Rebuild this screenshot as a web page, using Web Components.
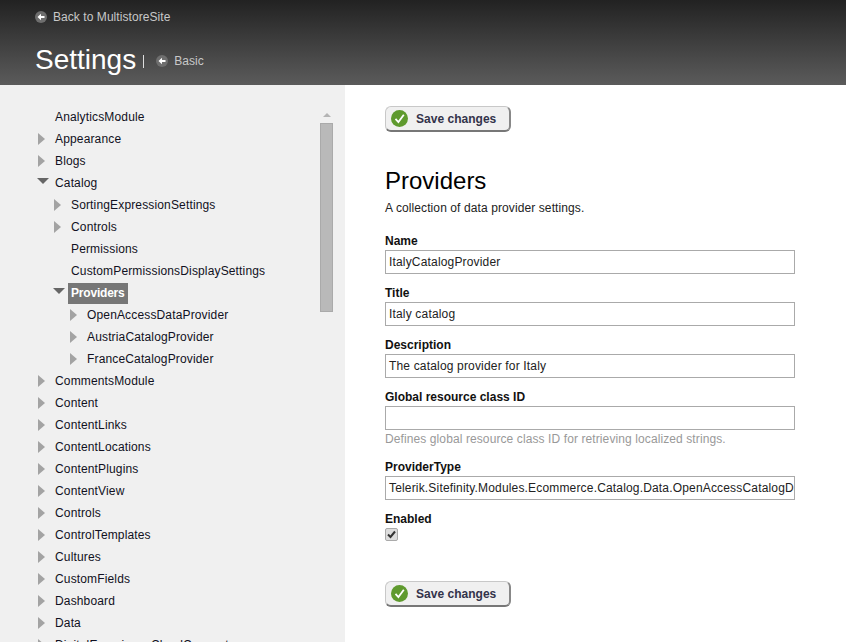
<!DOCTYPE html>
<html>
<head>
<meta charset="utf-8">
<title>Settings</title>
<style>
  html, body { margin: 0; padding: 0; height: 100%; overflow: hidden; background: #fff; }
  body { font-family: "Liberation Sans", Arial, sans-serif; font-size: 12px; color: #000; }
</style>
</head>
<body>
<template id="back-tpl">
  <style>
    :host { display: inline-flex; align-items: center; gap: 6px; color: #c8c8c8; font-size: 12px; letter-spacing: .06px; }
    svg { display: block; }
  </style>
  <svg width="12" height="12" viewBox="0 0 12 12"><circle cx="6" cy="6" r="6" fill="#6e6e6e"/><path d="M2.5 6 6 2.8V5h3.5v2H6v2.2z" fill="#fff"/></svg>
  <slot></slot>
</template>

<template id="header-tpl">
  <style>
    :host { display: block; height: 85px; box-sizing: border-box; padding: 11px 35px 0; background: linear-gradient(#222 0, #5b5b5b 100%); }
    .top { height: 12px; display: flex; align-items: center; }
    .row { display: flex; align-items: center; margin-top: 17px; }
    h1 { margin: 0; font-size: 28px; font-weight: normal; line-height: 40px; color: #fff; }
    .sep { width: 1px; height: 13px; background: #ddd; margin: 3px 12px 0 7px; }
    .basic { margin-top: 2px; }
  </style>
  <div class="top"><back-link>Back to MultistoreSite</back-link></div>
  <div class="row">
    <h1>Settings</h1>
    <span class="sep"></span>
    <back-link class="basic">Basic</back-link>
  </div>
</template>

<template id="tree-tpl">
  <style>
    :host { display: block; color: #111122; }
    .row { height: 22px; display: flex; align-items: center; }
    .arrow { width: 16px; height: 12px; flex: none; display: flex; align-items: center; margin-left: -1px; margin-right: 1px; }
    .label { padding: 0 3px; margin-left: -3px; line-height: 21px; height: 21px; letter-spacing: .15px; }
    :host([selected]) > .row .label { background: #777; color: #fff; font-weight: bold; letter-spacing: -.2px; }
    .kids { padding-left: 16px; }
    svg { display: block; }
  </style>
  <div class="row">
    <span class="arrow"></span>
    <span class="label"></span>
  </div>
  <div class="kids"><slot></slot></div>
</template>

<template id="sidebar-tpl">
  <style>
    :host { display: block; width: 345px; flex: none; position: relative; overflow: hidden; background: #f0f0f0; box-sizing: border-box; padding: 21px 0 0 39px; }
    .up { position: absolute; left: 323px; top: 28px; width: 0; height: 0; border: 4px solid transparent; border-top: 0; border-bottom: 4px solid #b4b4b4; }
    .thumb { position: absolute; left: 320px; top: 38px; width: 13px; height: 189px; box-sizing: border-box; background: #b9b9b9; border: 1px solid #aaa; }
  </style>
  <slot></slot>
  <div class="up"></div>
  <div class="thumb"></div>
</template>

<template id="button-tpl">
  <style>
    :host { display: inline-block; }
    button { display: flex; align-items: center; width: 126px; height: 26px; box-sizing: border-box; padding: 0 0 0 5px; margin: 0; background: #f0f0f0; border: 1px solid #c8c8c8; border-right: 2px solid #888; border-bottom: 2px solid #777; border-radius: 6px; font: bold 12px "Liberation Sans", Arial, sans-serif; letter-spacing: .02px; color: #33334a; }
    svg { display: block; margin-right: 8px; }
  </style>
  <button type="button">
    <svg width="17" height="17" viewBox="0 0 17 17"><circle cx="8.5" cy="8.5" r="8.5" fill="#5f9a2e"/><path d="M4.5 8.8 7.4 12 12.8 4.8" fill="none" stroke="#fff" stroke-width="1.8"/></svg>
    <slot></slot>
  </button>
</template>

<template id="field-tpl">
  <style>
    :host { display: block; margin-bottom: 12px; }
    label { display: block; font-weight: bold; line-height: 14px; margin-bottom: 2px; color: #111; }
    .box { height: 24px; width: 410px; box-sizing: border-box; border: 1px solid #aaa; padding: 0 3px; line-height: 22px; white-space: nowrap; overflow: hidden; color: #222; background: #fff; letter-spacing: .17px; }
    .hint { color: #999; line-height: 14px; margin-top: 2px; padding-bottom: 2px; letter-spacing: .1px; }
  </style>
  <label></label>
  <div class="box"></div>
  <div class="hint" hidden></div>
</template>

<template id="check-tpl">
  <style>
    :host { display: block; }
    label { display: block; font-weight: bold; line-height: 14px; color: #111; margin-bottom: 2px; }
    .box { display: flex; align-items: center; justify-content: center; width: 11px; height: 11px; border: 1px solid #aaa; border-radius: 2px; background: #ddd; }
    svg { display: block; }
  </style>
  <label><slot></slot></label>
  <div class="box"><svg width="9" height="9" viewBox="0 0 9 9"><path d="M1 4.5 3.5 7 8 1.5" fill="none" stroke="#333" stroke-width="2"/></svg></div>
</template>

<template id="panel-tpl">
  <style>
    :host { display: block; flex: 1; min-width: 0; background: #fff; box-sizing: border-box; padding: 21px 51px 0 40px; }
    h2 { margin: 34px 0 0; font-size: 24px; font-weight: normal; line-height: 30px; color: #000; }
    p { margin: 5px 0 19px; line-height: 14px; color: #222; letter-spacing: .1px; }
    .foot { margin-top: 40px; }
  </style>
  <save-button>Save changes</save-button>
  <h2>Providers</h2>
  <p>A collection of data provider settings.</p>
  <slot></slot>
  <div class="foot"><save-button>Save changes</save-button></div>
</template>

<template id="page-tpl">
  <style>
    :host { display: flex; flex-direction: column; height: 100vh; overflow: hidden; }
    .main { display: flex; flex: 1; min-height: 0; }
  </style>
  <top-header></top-header>
  <div class="main">
    <slot></slot>
  </div>
</template>

<settings-page>
  <settings-sidebar>
    <tree-node label="AnalyticsModule" leaf></tree-node>
    <tree-node label="Appearance"></tree-node>
    <tree-node label="Blogs"></tree-node>
    <tree-node label="Catalog" open>
      <tree-node label="SortingExpressionSettings"></tree-node>
      <tree-node label="Controls"></tree-node>
      <tree-node label="Permissions" leaf></tree-node>
      <tree-node label="CustomPermissionsDisplaySettings" leaf></tree-node>
      <tree-node label="Providers" open selected>
        <tree-node label="OpenAccessDataProvider"></tree-node>
        <tree-node label="AustriaCatalogProvider"></tree-node>
        <tree-node label="FranceCatalogProvider"></tree-node>
      </tree-node>
    </tree-node>
    <tree-node label="CommentsModule"></tree-node>
    <tree-node label="Content"></tree-node>
    <tree-node label="ContentLinks"></tree-node>
    <tree-node label="ContentLocations"></tree-node>
    <tree-node label="ContentPlugins"></tree-node>
    <tree-node label="ContentView"></tree-node>
    <tree-node label="Controls"></tree-node>
    <tree-node label="ControlTemplates"></tree-node>
    <tree-node label="Cultures"></tree-node>
    <tree-node label="CustomFields"></tree-node>
    <tree-node label="Dashboard"></tree-node>
    <tree-node label="Data"></tree-node>
    <tree-node label="DigitalExperienceCloudConnector"></tree-node>
  </settings-sidebar>
  <settings-panel>
    <text-field label="Name" value="ItalyCatalogProvider"></text-field>
    <text-field label="Title" value="Italy catalog"></text-field>
    <text-field label="Description" value="The catalog provider for Italy"></text-field>
    <text-field label="Global resource class ID" value="" hint="Defines global resource class ID for retrieving localized strings."></text-field>
    <text-field label="ProviderType" value="Telerik.Sitefinity.Modules.Ecommerce.Catalog.Data.OpenAccessCatalogDataProvider"></text-field>
    <check-field>Enabled</check-field>
  </settings-panel>
</settings-page>

<script>
function fromTemplate(el, id) {
  el.attachShadow({ mode: "open" });
  el.shadowRoot.appendChild(document.getElementById(id).content.cloneNode(true));
}

class simpleBox extends HTMLElement {
  constructor() {
    super();
    fromTemplate(this, this.constructor.tpl);
  }
}

class backLink extends simpleBox {}
backLink.tpl = "back-tpl";
class topHeader extends simpleBox {}
topHeader.tpl = "header-tpl";
class settingsSidebar extends simpleBox {}
settingsSidebar.tpl = "sidebar-tpl";
class saveButton extends simpleBox {}
saveButton.tpl = "button-tpl";
class checkField extends simpleBox {}
checkField.tpl = "check-tpl";
class settingsPanel extends simpleBox {}
settingsPanel.tpl = "panel-tpl";
class settingsPage extends simpleBox {}
settingsPage.tpl = "page-tpl";

class treeNode extends HTMLElement {
  constructor() {
    super();
    fromTemplate(this, "tree-tpl");
  }
  connectedCallback() {
    const root = this.shadowRoot;
    root.querySelector(".label").textContent = this.getAttribute("label");
    if (this.hasAttribute("leaf")) return;
    root.querySelector(".arrow").innerHTML = this.hasAttribute("open")
      ? '<svg width="12" height="12" viewBox="0 0 12 12" style="margin:-4px 0 0 -1px"><path d="M0 3h12L6 9z" fill="#666"/></svg>'
      : '<svg width="7" height="12" viewBox="0 0 7 12"><path d="M0 0 7 6 0 12z" fill="#a3a3a3"/></svg>';
  }
}

class textField extends HTMLElement {
  constructor() {
    super();
    fromTemplate(this, "field-tpl");
  }
  connectedCallback() {
    const root = this.shadowRoot;
    root.querySelector("label").textContent = this.getAttribute("label");
    root.querySelector(".box").textContent = this.getAttribute("value");
    const hint = this.getAttribute("hint");
    if (hint) {
      const h = root.querySelector(".hint");
      h.textContent = hint;
      h.hidden = false;
    }
  }
}

customElements.define("back-link", backLink);
customElements.define("top-header", topHeader);
customElements.define("settings-sidebar", settingsSidebar);
customElements.define("save-button", saveButton);
customElements.define("check-field", checkField);
customElements.define("settings-panel", settingsPanel);
customElements.define("settings-page", settingsPage);
customElements.define("tree-node", treeNode);
customElements.define("text-field", textField);
</script>
</body>
</html>
